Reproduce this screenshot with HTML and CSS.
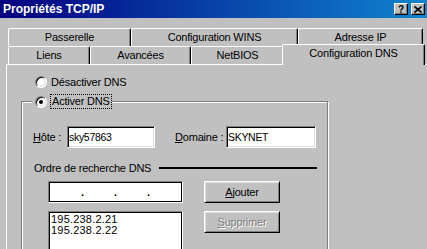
FILE: index.html
```
<!DOCTYPE html>
<html lang="fr">
<head>
  <meta charset="UTF-8">
  <meta name="viewport" content="width=device-width, initial-scale=1.0">
  <title>Propriétés TCP/IP</title>
  <link rel="stylesheet" href="styles.css">
</head>
<body>
  <div class="titlebar">
    <span class="title">Propriétés TCP/IP</span>
    <div class="caption-buttons">
      <button class="caption-btn">?</button>
      <button class="caption-btn">
        <svg width="8" height="7" viewBox="0 0 8 7"><path d="M0.5 0.5 L7.5 6.5 M7.5 0.5 L0.5 6.5" stroke="#000" stroke-width="1.6" fill="none"/></svg>
      </button>
    </div>
  </div>

  <div class="tabs">
    <div class="tab-row">
      <div class="tab tab-passerelle">Passerelle</div>
      <div class="tab tab-wins">Configuration WINS</div>
      <div class="tab tab-ip">Adresse IP</div>
    </div>
    <div class="tab-row">
      <div class="tab tab-liens">Liens</div>
      <div class="tab tab-avancees">Avancées</div>
      <div class="tab tab-netbios">NetBIOS</div>
      <div class="tab tab-dns selected">Configuration DNS</div>
    </div>
  </div>

  <div class="panel">
    <div class="radio-row">
      <span class="radio"></span>
      <span>Désactiver DNS</span>
    </div>

    <fieldset class="group">
      <legend>
        <span class="legend-inner">
          <span class="radio checked"></span>
          <span class="focus">Activer DNS</span>
        </span>
      </legend>

      <div class="host-row">
        <label class="field-label host-label"><u>H</u>ôte :</label>
        <input class="edit host-edit" type="text" value="sky57863">
        <label class="field-label domain-label"><u>D</u>omaine :</label>
        <input class="edit domain-edit" type="text" value="SKYNET">
      </div>

      <div class="order-row">
        <span>Ordre de recherche DNS</span>
        <span class="rule"></span>
      </div>

      <div class="dns-area">
        <div class="dns-left">
          <div class="ip-box">
            <span class="ip-field"></span><span class="ip-dot">.</span>
            <span class="ip-field"></span><span class="ip-dot">.</span>
            <span class="ip-field"></span><span class="ip-dot">.</span>
            <span class="ip-field"></span>
          </div>
          <div class="list-box">
            <div>195.238.2.21</div>
            <div>195.238.2.22</div>
          </div>
        </div>
        <div class="dns-buttons">
          <button class="btn"><u>A</u>jouter</button>
          <button class="btn" disabled><u>S</u>upprimer</button>
        </div>
      </div>
    </fieldset>
  </div>
</body>
</html>
```

FILE: styles.css
```
/* Win9x style TCP/IP dialog */
body {
  margin: 0;
  background: #c0c0c0;
  font-family: "Liberation Sans", Arial, sans-serif;
  font-size: 11px;
  letter-spacing: -0.2px;
  color: #000;
  overflow: hidden;
  height: 249px;
}
.titlebar {
  height: 18px;
  display: flex;
  align-items: center;
  padding: 0 2px 0 3px;
  background: linear-gradient(to right, #000080, #1084d0);
}
.title {
  color: #fff;
  font-weight: bold;
  font-size: 12px;
  letter-spacing: 0;
  line-height: 18px;
}
.caption-buttons {
  margin-left: auto;
  display: flex;
  gap: 3px;
}
.caption-btn {
  width: 14px;
  height: 12px;
  padding: 0;
  box-sizing: border-box;
  background: #c0c0c0;
  border: 1px solid;
  border-color: #fff #000 #000 #fff;
  box-shadow: inset -1px -1px #808080;
  font-family: inherit;
  font-weight: bold;
  font-size: 10px;
  line-height: 9px;
  display: flex;
  align-items: center;
  justify-content: center;
}

/* tabs */
.tabs {
  margin: 10px 0 0 8px;
}
.tab-row {
  display: flex;
  align-items: flex-start;
  height: 18px;
}
.tab {
  box-sizing: border-box;
  height: 18px;
  flex: none;
  border-top: 1px solid #fff;
  border-left: 1px solid #fff;
  border-right: 1px solid #000;
  border-radius: 2px 2px 0 0;
  box-shadow: inset -1px 0 #808080;
  background: #c0c0c0;
  text-align: center;
  padding-top: 2px;
  line-height: 13px;
  white-space: nowrap;
}
.tab-passerelle { width: 123px; }
.tab-wins { width: 167px; }
.tab-ip { width: 125px; }
.tab-liens { width: 82px; }
.tab-avancees { width: 101px; }
.tab-netbios { width: 93px; }
.tab-dns { width: 143px; }
.tab.selected {
  height: 21px;
  margin: -2px 0 0 -2px;
  position: relative;
  z-index: 1;
}

/* page */
.panel {
  margin-left: 6px;
  border-top: 1px solid #fff;
  border-left: 1px solid #fff;
  height: 174px;
  padding-top: 10px;
  overflow: hidden;
}
.radio-row {
  display: flex;
  align-items: center;
  gap: 4px;
  height: 14px;
  padding-left: 28px;
  line-height: 13px;
}
.radio {
  box-sizing: border-box;
  width: 12px;
  height: 12px;
  flex: none;
  border-radius: 50%;
  border: 1px solid;
  border-color: #808080 #fff #fff #808080;
  background: #fff;
  box-shadow: inset 1px 1px #000, inset -1px -1px #dfdfdf;
  display: flex;
  align-items: center;
  justify-content: center;
}
.radio.checked::after {
  content: "";
  width: 4px;
  height: 4px;
  border-radius: 50%;
  background: #000;
}

.group {
  box-sizing: border-box;
  width: 307px;
  height: 180px;
  margin: 5px 0 0 14px;
  padding: 0 0 0 11px;
  border: 1px solid #808080;
  box-shadow: inset 1px 1px #fff, 1px 1px #fff;
}
.group legend {
  margin-left: -1px;
  padding: 0 0 0 3px;
  background: #c0c0c0;
}
.legend-inner {
  display: flex;
  align-items: center;
  gap: 3px;
  height: 15px;
}
.focus {
  border: 1px dotted #000;
  padding: 0 1px;
  line-height: 13px;
}

.host-row {
  display: flex;
  align-items: center;
  height: 22px;
  margin-top: 17px;
}
.field-label {
  flex: none;
  white-space: nowrap;
}
.host-label { width: 34px; }
.domain-label { width: 51px; margin-left: 20px; }
.edit {
  box-sizing: border-box;
  height: 22px;
  margin: 0;
  padding: 0 1px;
  border: 1px solid;
  border-color: #808080 #fff #fff #808080;
  box-shadow: inset 1px 1px #000, inset -1px -1px #dfdfdf;
  background: #fff;
  font-family: inherit;
  font-size: 10.5px;
  letter-spacing: -0.3px;
  color: #000;
  outline: none;
}
.host-edit { width: 88px; }
.domain-edit { width: 90px; }

.order-row {
  display: flex;
  align-items: center;
  justify-content: space-between;
  height: 13px;
  line-height: 13px;
  margin-top: 14px;
  padding: 0 10px 0 1px;
}
.rule {
  width: 158px;
  height: 2px;
  margin-bottom: 1px;
  background: #000;
}

.dns-area {
  display: flex;
  margin-top: 6px;
}
.dns-left {
  width: 135px;
  margin-left: 15px;
}
.ip-box,
.list-box {
  box-sizing: border-box;
  border: 1px solid;
  border-color: #808080 #fff #fff #808080;
  box-shadow: inset 0 0 0 1px #000;
  background: #fff;
}
.ip-box {
  height: 22px;
  display: flex;
  align-items: center;
  padding: 0 2px;
}
.ip-field {
  flex: 1;
}
.ip-dot {
  width: 3px;
  text-align: center;
  font-weight: bold;
}
.list-box {
  height: 60px;
  margin-top: 8px;
  padding: 2px 2px 0;
  line-height: 11px;
  letter-spacing: 0.2px;
}
.dns-buttons {
  display: flex;
  flex-direction: column;
  gap: 8px;
  margin-left: 21px;
}
.btn {
  box-sizing: border-box;
  width: 76px;
  height: 22px;
  padding: 0;
  background: #c0c0c0;
  border: 1px solid;
  border-color: #fff #000 #000 #fff;
  box-shadow: inset 1px 1px #dfdfdf, inset -1px -1px #808080;
  font-family: inherit;
  font-size: 11px;
  letter-spacing: -0.2px;
  color: #000;
}
.btn:disabled {
  color: #808080;
  text-shadow: 1px 1px 0 #fff;
}
```
